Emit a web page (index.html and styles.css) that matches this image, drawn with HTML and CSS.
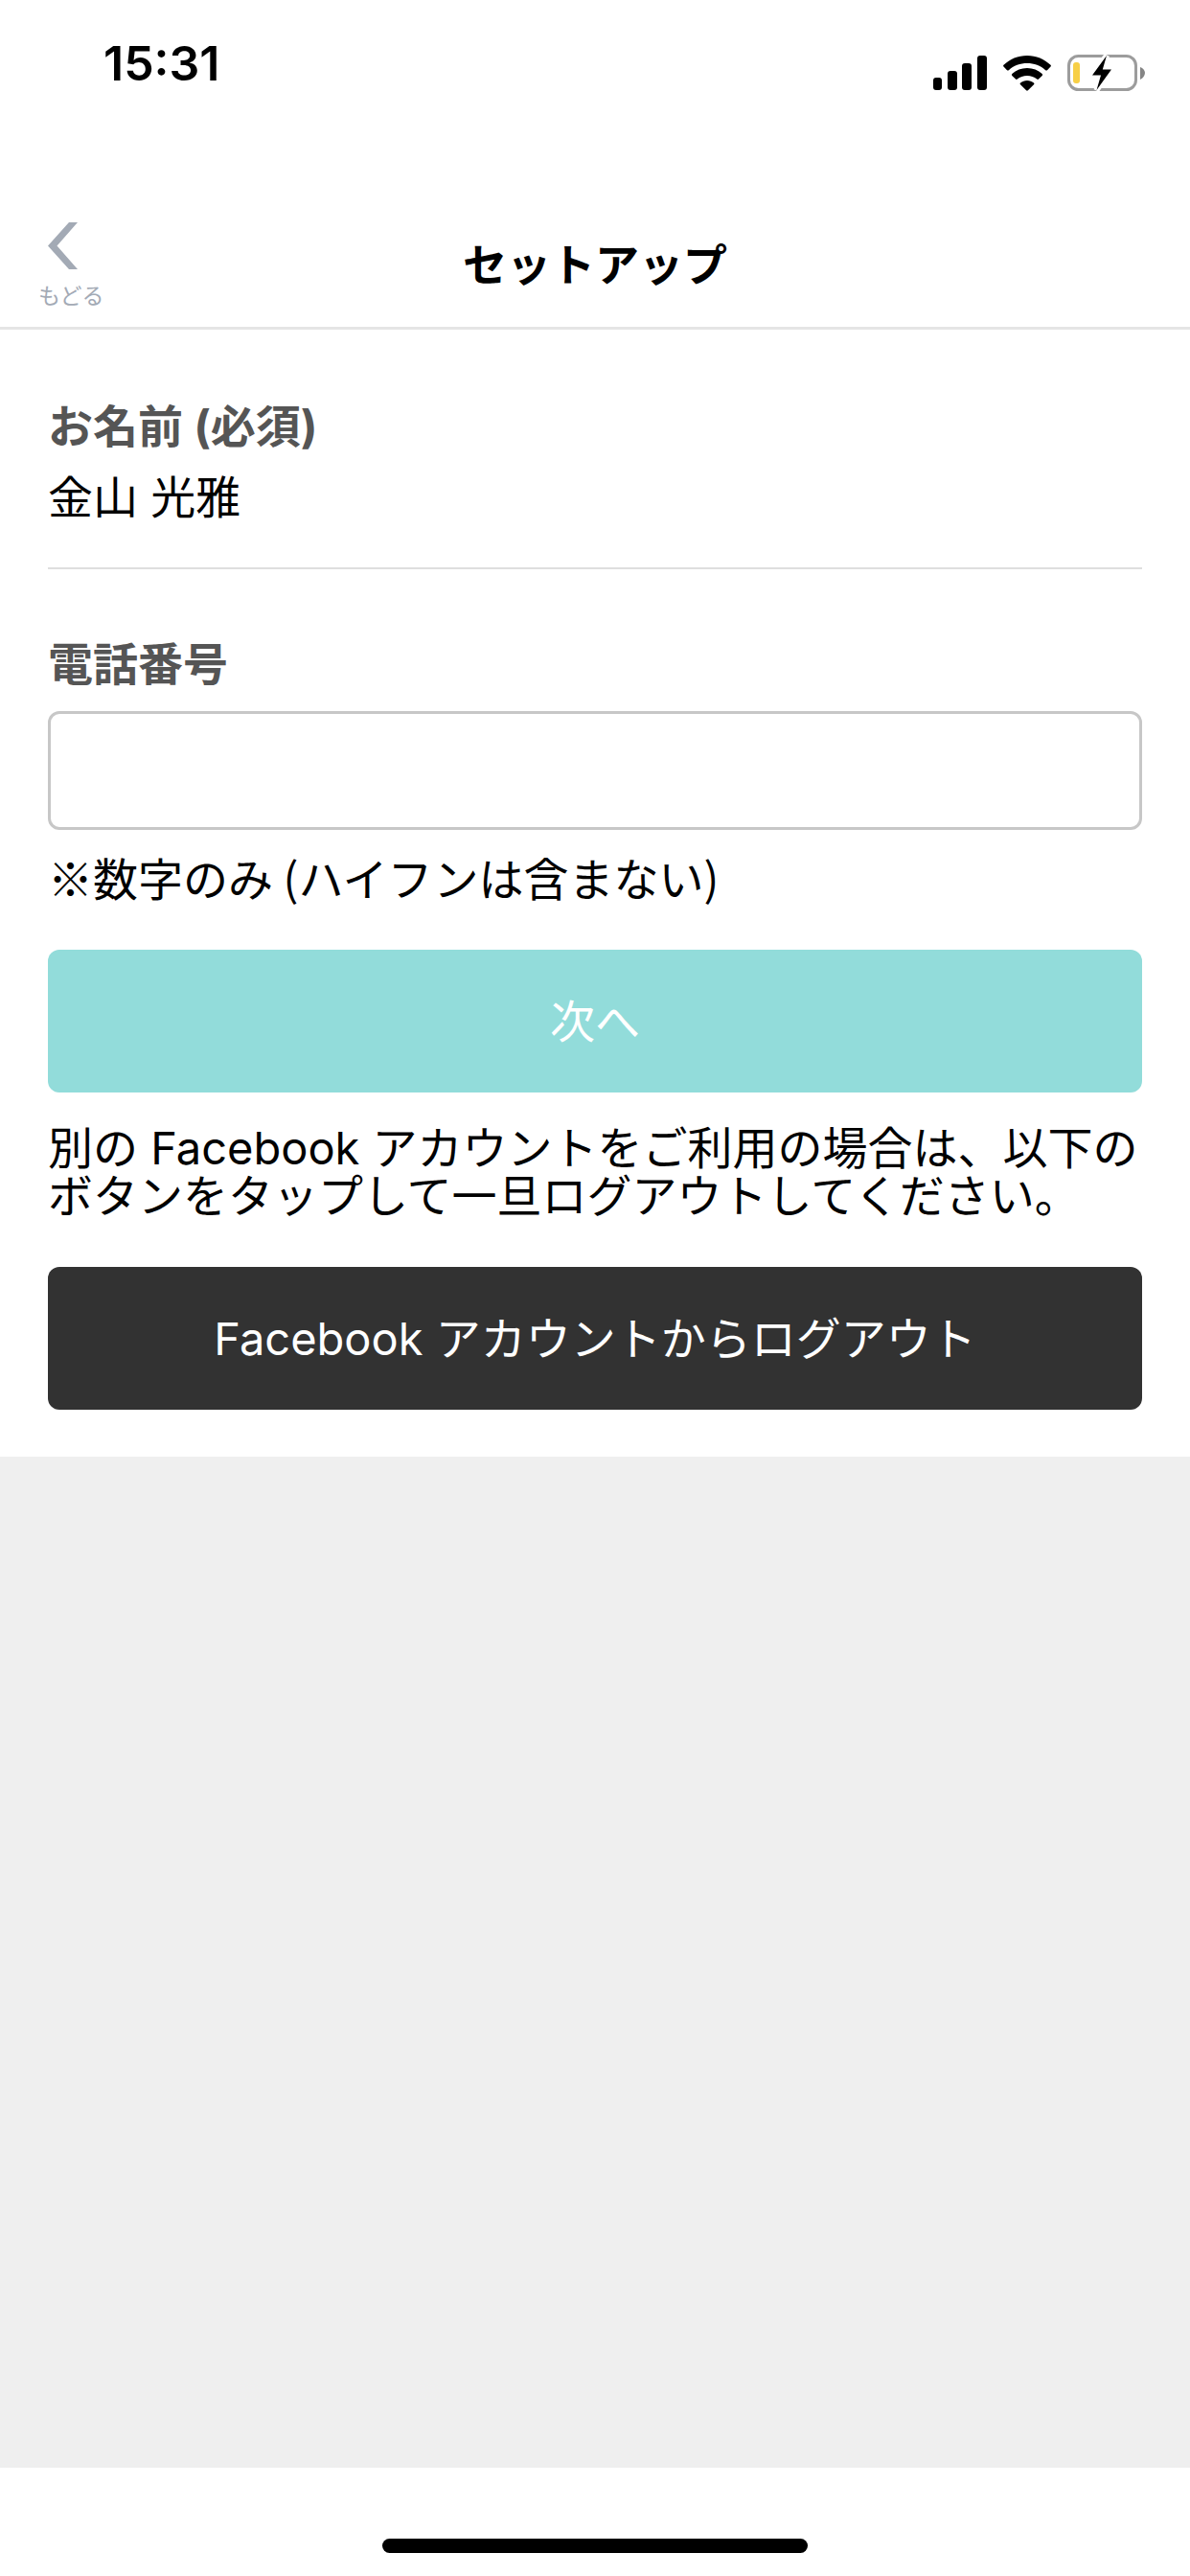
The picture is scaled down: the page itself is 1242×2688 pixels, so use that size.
FILE: index.html
```html
<!DOCTYPE html>
<html lang="ja">

<head>
    <meta charset="UTF-8">
    <meta name="viewport" content="width=device-width, initial-scale=1.0">
    <title>セットアップ</title>
    <link rel="stylesheet" href="styles.css">
</head>

<body>
    <div class="status-bar">
        <span class="time">15:31</span>
        <div class="status-icons">
            <svg class="signal" width="56" height="36" viewBox="0 0 56 36">
                <rect x="0" y="23" width="9" height="13" rx="3"/>
                <rect x="15" y="16" width="10" height="20" rx="3"/>
                <rect x="30" y="8" width="10" height="28" rx="3"/>
                <rect x="46" y="0" width="10" height="36" rx="3"/>
            </svg>
            <svg class="wifi" width="50" height="37" viewBox="0 0 50 37">
                <path d="M25 0C34.500 0 43 3.700 49.500 9.800Q50.300 10.700 49.500 11.600L46 15.200Q45.100 16 44.200 15.200C39 10.500 32.300 8 25 8S11 10.500 5.800 15.200Q4.900 16 4 15.200L.5 11.600Q-.3 10.700 .5 9.800C7 3.700 15.500 0 25 0Z"/>
                <path d="M25 13C31 13 36.500 15.200 40.700 19Q41.600 20 40.700 20.900L37 24.500Q36.100 25.300 35.200 24.500C32.400 22.200 28.900 21 25 21S17.600 22.200 14.800 24.500Q13.900 25.300 13 24.500L9.300 20.900Q8.400 20 9.300 19C13.500 15.200 19 13 25 13Z"/>
                <path d="M25 26C27.700 26 30 26.900 32 28.400Q32.900 29.300 32 30.200L25.900 36.300Q25 37.100 24.100 36.300L18 30.200Q17.100 29.300 18 28.400C20 26.900 22.300 26 25 26Z"/>
            </svg>
            <svg class="battery" width="82" height="38" viewBox="0 0 82 38">
                <rect x="1.500" y="1.500" width="70" height="35" rx="10" fill="none" stroke="#9c9c9c" stroke-width="3"/>
                <path d="M76 13C79 14 81 16.500 81 19S79 24.500 76 26Z" fill="#858585"/>
                <rect x="6" y="8" width="7" height="22" rx="3" fill="#f7cf46"/>
                <path d="M41 1L26 21.500H35L30.500 37L46 15.500H36.800Z" stroke="#fff" stroke-width="6"/>
                <path d="M41 1L26 21.500H35L30.500 37L46 15.500H36.800Z"/>
            </svg>
        </div>
    </div>

    <header class="header">
        <button class="back-button" type="button">
            <svg width="31" height="49" viewBox="0 0 31 49">
                <path d="M22 0H31L9.500 24.500L31 49H22L0 24.500Z" fill="#a3aab5"/>
            </svg>
            <span>もどる</span>
        </button>
        <h1>セットアップ</h1>
    </header>

    <main class="content">
        <section class="name-section">
            <h2>お名前 (必須)</h2>
            <p>金山 光雅</p>
        </section>

        <form class="setup-form">
            <label for="phone">電話番号</label>
            <input type="tel" id="phone" name="phone">
            <p class="note">※数字のみ (ハイフンは含まない)</p>
            <button class="button next-button" type="submit">次へ</button>
        </form>

        <p class="logout-text">別の Facebook アカウントをご利用の場合は、以下のボタンをタップして一旦ログアウトしてください。</p>
        <button class="button logout-button" type="button">Facebook アカウントからログアウト</button>
    </main>

    <footer class="home-area">
        <div class="home-bar"></div>
    </footer>
</body>

</html>
```

FILE: styles.css
```css
* {
    box-sizing: border-box;
}

body {
    font-family: Inter, "Noto Sans CJK JP", sans-serif;
    font-size: 47px;
    line-height: 50px;
    display: flex;
    flex-direction: column;
    min-height: 100vh;
    margin: 0;
    background-color: #efefef;
    color: #000;
}

h1, h2, p {
    margin: 0;
}

h1 {
    font-size: 46px;
}

h2, p, button, input {
    font-family: inherit;
    font-size: 47px;
}

.status-bar {
    display: flex;
    justify-content: space-between;
    align-items: center;
    height: 132px;
    padding: 0 46px 0 108px;
    background-color: #fff;
}

.time {
    font-size: 50px;
    font-weight: 600;
}

.status-icons {
    display: flex;
    align-items: center;
    gap: 17px;
    padding-top: 20px;
}

.header {
    display: grid;
    grid-template-columns: 1fr auto 1fr;
    align-items: center;
    height: 212px;
    padding: 0 40px;
    border-bottom: 3px solid #e5e5e5;
    background-color: #fff;
}

.header h1 {
    padding-top: 78px;
    font-weight: 700;
}

.back-button {
    display: flex;
    flex-direction: column;
    justify-self: start;
    gap: 10px;
    padding: 86px 0 0;
    border: none;
    background: none;
    color: #a3aab5;
    font-size: 23px;
    line-height: 36px;
    cursor: pointer;
}

.back-button svg {
    margin-left: 10px;
}

.content {
    padding: 76px 50px 49px;
    background-color: #fff;
}

h2, label {
    color: #555;
    font-weight: 700;
}

.name-section {
    padding-bottom: 48px;
    border-bottom: 2px solid #dedede;
}

.name-section p {
    margin-top: 24px;
}

.setup-form {
    display: flex;
    flex-direction: column;
    padding-top: 74px;
}

#phone {
    height: 124px;
    margin-top: 24px;
    padding: 0 24px;
    border: 3px solid #c7c7c7;
    border-radius: 12px;
    background-color: #fff;
}

.note {
    margin: 24px 0 51px;
    font-family: "Noto Sans CJK JP", sans-serif;
}

.button {
    width: 100%;
    height: 149px;
    padding: 0 0 6px;
    border: none;
    border-radius: 12px;
    color: #fff;
    cursor: pointer;
}

.next-button {
    background-color: #92dcda;
}

.logout-text {
    margin: 33px 0 49px;
}

.logout-button {
    background-color: #323232;
}

.home-area {
    display: flex;
    justify-content: center;
    align-items: flex-end;
    height: 113px;
    margin-top: auto;
    padding-bottom: 24px;
    background-color: #fff;
}

.home-bar {
    width: 444px;
    height: 15px;
    border-radius: 8px;
    background-color: #000;
}
```
